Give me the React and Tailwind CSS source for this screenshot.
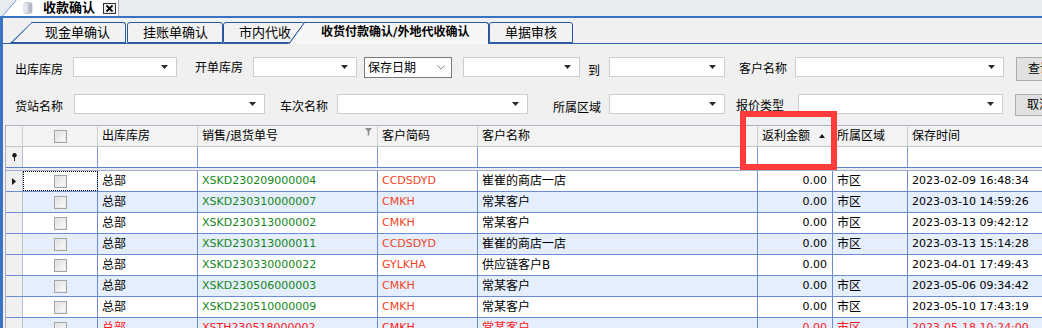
import React from "react";

// 收款确认 — 收货付款确认/外地代收确认 grid view

const rows = [
  { wh: "总部", no: "XSKD230209000004", code: "CCDSDYD", name: "崔崔的商店一店", amt: "0.00", area: "市区", time: "2023-02-09 16:48:34" },
  { wh: "总部", no: "XSKD230310000007", code: "CMKH", name: "常某客户", amt: "0.00", area: "市区", time: "2023-03-10 14:59:26" },
  { wh: "总部", no: "XSKD230313000002", code: "CMKH", name: "常某客户", amt: "0.00", area: "市区", time: "2023-03-13 09:42:12" },
  { wh: "总部", no: "XSKD230313000011", code: "CCDSDYD", name: "崔崔的商店一店", amt: "0.00", area: "市区", time: "2023-03-13 15:14:28" },
  { wh: "总部", no: "XSKD230330000022", code: "GYLKHA", name: "供应链客户B", amt: "0.00", area: "", time: "2023-04-01 17:49:43" },
  { wh: "总部", no: "XSKD230506000003", code: "CMKH", name: "常某客户", amt: "0.00", area: "市区", time: "2023-05-06 09:34:42" },
  { wh: "总部", no: "XSKD230510000009", code: "CMKH", name: "常某客户", amt: "0.00", area: "市区", time: "2023-05-10 17:43:19" },
  { wh: "总部", no: "XSTH230518000002", code: "CMKH", name: "常某客户", amt: "0.00", area: "市区", time: "2023-05-18 10:24:00", red: true },
];

function Arrow() {
  return (
    <svg width="7" height="4" viewBox="0 0 7 4" className="shrink-0">
      <path d="M0 0H7L3.5 4Z" fill="#2a2a2a" />
    </svg>
  );
}

function Drop({ className }) {
  return (
    <div className={`h-[20px] shrink-0 bg-white border border-[#cdcdcd] flex items-center justify-end pr-[8px] ${className}`}>
      <Arrow />
    </div>
  );
}

function Label({ className, children }) {
  return (
    <span className={`shrink-0 text-[12px] leading-[14px] text-black whitespace-nowrap ${className}`}>
      {children}
    </span>
  );
}

function Check() {
  return (
    <div className="w-[13px] h-[13px] border border-[#a4a4a4] bg-gradient-to-br from-[#dcdcdc] to-white shadow-[inset_0_0_0_1px_#e9e9e9]" />
  );
}

function Tab({ className, children }) {
  return (
    <div className={`relative h-[21px] shrink-0 border border-[#2a58a0] rounded-t-[3px] bg-[#f2f2f2] text-[13px] leading-[19px] text-black whitespace-nowrap ${className}`}>
      {children}
    </div>
  );
}

export default function App() {
  return (
    <div className="relative w-[1042px] h-[328px] overflow-hidden bg-[#f0f0f0] [font-family:'DejaVu_Sans','Noto_Sans_CJK_SC',sans-serif]">
      {/* document tab strip */}
      <div className="h-[18px] bg-[#e8ebf0] border-b-2 border-[#3a72c4] flex items-start">
        <div className="relative ml-[2px] w-[117px] h-[16px] bg-white border-r border-[#a8b0be] [clip-path:polygon(14px_0,100%_0,100%_100%,0_100%)] flex items-center">
          <svg className="absolute left-0 top-0" width="16" height="16" viewBox="0 0 16 16">
            <path d="M0 16L14 0" stroke="#4a7fd0" strokeWidth="1.2" />
          </svg>
          <svg className="ml-[21px]" width="10" height="12" viewBox="0 0 10 12">
            <defs>
              <linearGradient id="pg" x1="0" x2="1">
                <stop offset="0" stopColor="#ffffff" />
                <stop offset="1" stopColor="#9aa3b0" />
              </linearGradient>
            </defs>
            <rect x="1" y="0.5" width="8" height="11" rx="2" fill="url(#pg)" stroke="#c6ccd6" />
          </svg>
          <span className="ml-[10px] text-[13px] leading-[14px] font-bold text-black">收款确认</span>
          <div className="ml-[8px] w-[13px] h-[11px] border border-[#333] bg-[#ececec] flex items-center justify-center">
            <svg width="7" height="7" viewBox="0 0 7 7">
              <path d="M0.5 0.5L6.5 6.5M6.5 0.5L0.5 6.5" stroke="#000" strokeWidth="1.8" />
            </svg>
          </div>
        </div>
      </div>

      {/* body with blue left edge */}
      <div className="border-l-[3px] border-[#3b72c2]">
        {/* sub tabs */}
        <div className="h-[26px] pt-[4px] border-b border-[#2f5ea6] flex items-start pl-[7px]">
          <Tab className="w-[116px] pl-[35px] border-l-0 [clip-path:polygon(22px_0,100%_0,100%_100%,0_100%)]">
            <svg className="absolute left-0 top-[-1px]" width="23" height="22" viewBox="0 0 23 22">
              <path d="M0 22L22 0" stroke="#2a58a0" strokeWidth="1.2" />
            </svg>
            现金单确认
          </Tab>
          <Tab className="ml-[1px] w-[96px] pl-[15px]">挂账单确认</Tab>
          <Tab className="w-[82px] pl-[15px]">市内代收</Tab>
          <div className="relative z-10 -ml-[17px] w-[201px] h-[22px] shrink-0 border-t border-r border-[#2a58a0] rounded-tr-[3px] bg-[#f6f6f6] [clip-path:polygon(16px_0,100%_0,100%_100%,0_100%)] pl-[33px] text-[12px] leading-[19px] font-bold text-black whitespace-nowrap">
            <svg className="absolute left-0 top-0" width="17" height="22" viewBox="0 0 17 22">
              <path d="M0 22L16 0" stroke="#2a58a0" strokeWidth="1.2" />
            </svg>
            收货付款确认/外地代收确认
          </div>
          <Tab className="w-[84px] pl-[15px]">单据审核</Tab>
        </div>

        {/* filters */}
        <div className="h-[81px] pt-[13px] flex flex-col gap-[13px]">
          <div className="flex items-start pl-[12px]">
            <Label className="w-[58px] mt-[6px]">出库库房</Label>
            <Drop className="w-[104px]" />
            <Label className="ml-[18px] w-[58px] mt-[4px]">开单库房</Label>
            <Drop className="w-[104px]" />
            <div className="ml-[7px] w-[88px] h-[21px] shrink-0 bg-white border border-[#7a7a7a] flex items-center justify-between pl-[3px] pr-[6px]">
              <span className="text-[12px] leading-[14px]">保存日期</span>
              <svg width="8" height="5" viewBox="0 0 8 5">
                <path d="M0.5 0.5L4 4L7.5 0.5" fill="none" stroke="#8a8a8a" strokeWidth="1" />
              </svg>
            </div>
            <Drop className="ml-[11px] w-[117px]" />
            <Label className="ml-[8px] w-[21px] mt-[7px]">到</Label>
            <Drop className="w-[116px]" />
            <Label className="ml-[14px] w-[56px] mt-[5px]">客户名称</Label>
            <Drop className="w-[209px]" />
            <div className="ml-[12px] w-[60px] h-[24px] shrink-0 bg-[#e1e1e1] border border-[#adadad] pl-[11px] text-[12px] leading-[22px]">查询</div>
          </div>
          <div className="flex items-start pl-[12px]">
            <Label className="w-[59px] mt-[6px]">货站名称</Label>
            <Drop className="w-[191px]" />
            <Label className="ml-[15px] w-[57px] mt-[6px]">车次名称</Label>
            <Drop className="w-[191px]" />
            <Label className="ml-[25px] w-[56px] mt-[7px]">所属区域</Label>
            <Drop className="w-[116px]" />
            <Label className="ml-[11px] w-[62px] mt-[5px]">报价类型</Label>
            <Drop className="w-[205px]" />
            <div className="ml-[12px] w-[60px] h-[22px] shrink-0 bg-[#e1e1e1] border border-[#adadad] pl-[11px] text-[12px] leading-[20px]">取消</div>
          </div>
        </div>

        {/* grid */}
        <div className="ml-[2px] border-t border-l border-[#a9b3c4] w-[1070px]">
          {/* header */}
          <div className="flex h-[21px] bg-[#f3f3f3] border-b border-[#c4c4c4] text-[12px] leading-[14px] text-black">
            <div className="w-[17px] shrink-0 border-r border-[#cfcfcf]" />
            <div className="w-[75px] shrink-0 border-r border-[#cfcfcf] flex items-center justify-center pl-[1px]">
              <Check />
            </div>
            <div className="w-[100px] shrink-0 border-r border-[#cfcfcf] flex items-center pl-[4px]">出库库房</div>
            <div className="relative w-[180px] shrink-0 border-r border-[#cfcfcf] flex items-center pl-[4px]">
              销售/退货单号
              <svg className="absolute right-[5px] top-[2px]" width="7" height="8" viewBox="0 0 7 8">
                <path d="M0 0H7L4.3 3.2V7L2.7 8V3.2Z" fill="#8c8c8c" />
              </svg>
            </div>
            <div className="w-[100px] shrink-0 border-r border-[#cfcfcf] flex items-center pl-[4px]">客户简码</div>
            <div className="w-[280px] shrink-0 border-r border-[#cfcfcf] flex items-center pl-[4px]">客户名称</div>
            <div className="w-[75px] shrink-0 border-r border-[#cfcfcf] flex items-center justify-between pl-[4px] pr-[7px]">
              返利金额
              <svg width="6" height="4" viewBox="0 0 6 4">
                <path d="M0 4H6L3 0Z" fill="#1a1a1a" />
              </svg>
            </div>
            <div className="w-[75px] shrink-0 border-r border-[#cfcfcf] flex items-center pl-[4px]">所属区域</div>
            <div className="w-[160px] shrink-0 flex items-center pl-[4px]">保存时间</div>
          </div>

          {/* auto filter row */}
          <div className="flex h-[21px] bg-white border-b border-[#5d7fcf]">
            <div className="w-[17px] shrink-0 bg-[#f0f0f0] border-r border-[#b8c2d4] flex items-center justify-center">
              <svg width="5" height="8" viewBox="0 0 5 8">
                <circle cx="2.5" cy="2.2" r="2.2" fill="#1a1a1a" />
                <path d="M2.5 3V8" stroke="#1a1a1a" strokeWidth="1" />
              </svg>
            </div>
            <div className="w-[75px] shrink-0 border-r border-[#7d98da]" />
            <div className="w-[100px] shrink-0 border-r border-[#7d98da]" />
            <div className="w-[180px] shrink-0 border-r border-[#7d98da]" />
            <div className="w-[100px] shrink-0 border-r border-[#7d98da]" />
            <div className="w-[280px] shrink-0 border-r border-[#7d98da]" />
            <div className="w-[75px] shrink-0 border-r border-[#7d98da]" />
            <div className="w-[75px] shrink-0 border-r border-[#7d98da]" />
            <div className="w-[160px] shrink-0" />
          </div>
          <div className="h-[3px] bg-[#ececec] border-b border-[#9fb0d2]" />

          {/* data rows */}
          {rows.map((r, i) => {
            const bg = i % 2 === 0 ? "bg-white" : "bg-[#e5eefc]";
            const txt = r.red ? "text-[#ff1a1a]" : "text-black";
            return (
              <div key={r.no} className={`flex h-[21px] border-b border-[#6b8bd6] text-[12px] leading-[14px] ${bg}`}>
                <div className="w-[17px] shrink-0 bg-[#f0f0f0] border-r border-[#b8c2d4] flex items-center justify-center">
                  {i === 0 && (
                    <svg width="4" height="7" viewBox="0 0 4 7">
                      <path d="M0 0L4 3.5L0 7Z" fill="#1a1a1a" />
                    </svg>
                  )}
                </div>
                <div
                  className={`w-[75px] shrink-0 border-r border-[#6b8bd6] flex items-center justify-center pl-[1px] ${
                    i === 0 ? "outline-1 outline-dotted outline-black -outline-offset-1" : ""
                  }`}
                >
                  <Check />
                </div>
                <div className={`w-[100px] shrink-0 border-r border-[#6b8bd6] flex items-center pl-[4px] ${txt}`}>{r.wh}</div>
                <div className={`w-[180px] shrink-0 border-r border-[#6b8bd6] flex items-center pl-[4px] text-[11px] ${r.red ? "text-[#ff1a1a]" : "text-[#13871b]"}`}>
                  {r.no}
                </div>
                <div className={`w-[100px] shrink-0 border-r border-[#6b8bd6] flex items-center pl-[4px] text-[11px] ${r.red ? "text-[#ff1a1a]" : "text-[#f4431f]"}`}>
                  {r.code}
                </div>
                <div className={`w-[280px] shrink-0 border-r border-[#6b8bd6] flex items-center pl-[4px] ${txt}`}>{r.name}</div>
                <div className={`w-[75px] shrink-0 border-r border-[#6b8bd6] flex items-center justify-end pr-[5px] text-[11px] ${txt}`}>{r.amt}</div>
                <div className={`w-[75px] shrink-0 border-r border-[#6b8bd6] flex items-center pl-[4px] ${txt}`}>{r.area}</div>
                <div className={`w-[160px] shrink-0 flex items-center pl-[4px] text-[11px] ${txt}`}>{r.time}</div>
              </div>
            );
          })}
        </div>
      </div>

      {/* red highlight annotation */}
      <div className="absolute left-[740px] top-[111px] w-[97px] h-[59px] border-[6px] border-[#ff3b3b]" />
    </div>
  );
}
